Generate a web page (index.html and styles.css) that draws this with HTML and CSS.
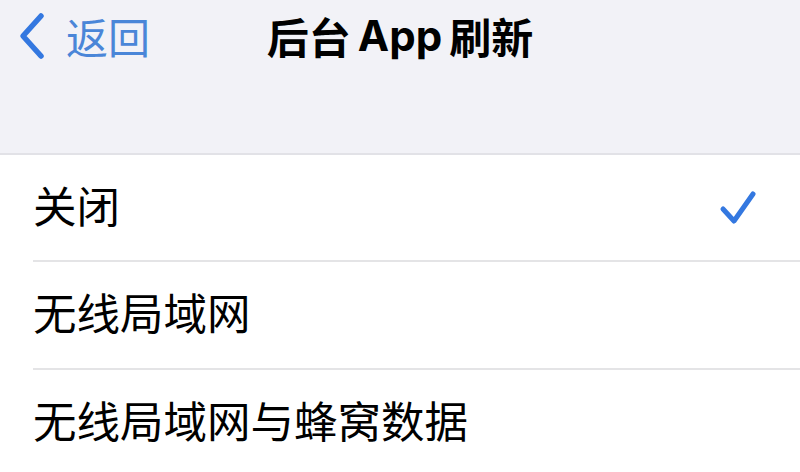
FILE: index.html
```html
<!DOCTYPE html>
<html lang="zh-CN">
<head>
<meta charset="utf-8">
<link rel="stylesheet" href="styles.css">
</head>
<body>
<div class="screen">
  <header class="navbar">
    <div class="back">
      <svg class="chevron" viewBox="0 0 28 48" width="28" height="48">
        <path d="M23 4 L5 24 L23 44" fill="none" stroke="#3478e0" stroke-width="5.5" stroke-linecap="round" stroke-linejoin="round"/>
      </svg>
      <span class="back-label">返回</span>
    </div>
    <h1 class="title">后台<span class="latin">App</span>刷新</h1>
  </header>
  <div class="gap"></div>
  <ul class="list">
    <li class="row"><span class="label">关闭</span>
      <svg class="check" viewBox="0 0 40 40" width="40" height="40">
        <path d="M5 21 L16 33 L35 6" fill="none" stroke="#3478e0" stroke-width="5" stroke-linecap="round" stroke-linejoin="round"/>
      </svg>
    </li>
    <li class="row"><span class="label">无线局域网</span></li>
    <li class="row"><span class="label">无线局域网与蜂窝数据</span></li>
  </ul>
</div>
</body>
</html>
```
FILE: styles.css
```css
html, body {
  margin: 0;
  padding: 0;
}
body {
  width: 800px;
  height: 472px;
  overflow: hidden;
  background: #f2f2f7;
  font-family: "Noto Sans CJK SC", "Noto Sans", sans-serif;
}
.screen {
  width: 800px;
  height: 472px;
  display: flex;
  flex-direction: column;
  overflow: hidden;
}
.navbar {
  position: relative;
  height: 72px;
  flex-shrink: 0;
  display: flex;
  align-items: center;
}
.back {
  display: flex;
  align-items: center;
  padding-left: 18px;
  gap: 20px;
  color: #4a86d8;
}
.chevron {
  display: block;
}
.back-label {
  font-size: 42px;
  line-height: 1;
  font-weight: 400;
}
.title {
  position: absolute;
  left: 0;
  right: 0;
  top: 0;
  height: 72px;
  margin: 0;
  display: flex;
  align-items: center;
  justify-content: center;
  font-size: 42px;
  font-weight: 700;
  color: #000;
  line-height: 1;
  pointer-events: none;
}
.latin {
  font-family: "Inter", "Noto Sans", sans-serif;
  font-weight: 700;
  margin: 0 7px;
}
.gap {
  height: 81px;
  flex-shrink: 0;
  border-bottom: 2px solid #e2e2e7;
}
.list {
  list-style: none;
  margin: 0;
  padding: 0 0 0 33px;
  background: #fff;
  flex-shrink: 0;
  flex-grow: 1;
}
.row {
  height: 107px;
  display: flex;
  align-items: center;
  justify-content: space-between;
  padding-right: 42px;
  border-bottom: 2px solid #e4e4e6;
  box-sizing: border-box;
}
.row:nth-child(2) {
  height: 108px;
}
.label {
  font-size: 43.5px;
  line-height: 1;
  color: #000;
  margin-bottom: 6px;
}
.check {
  display: block;
}
```
